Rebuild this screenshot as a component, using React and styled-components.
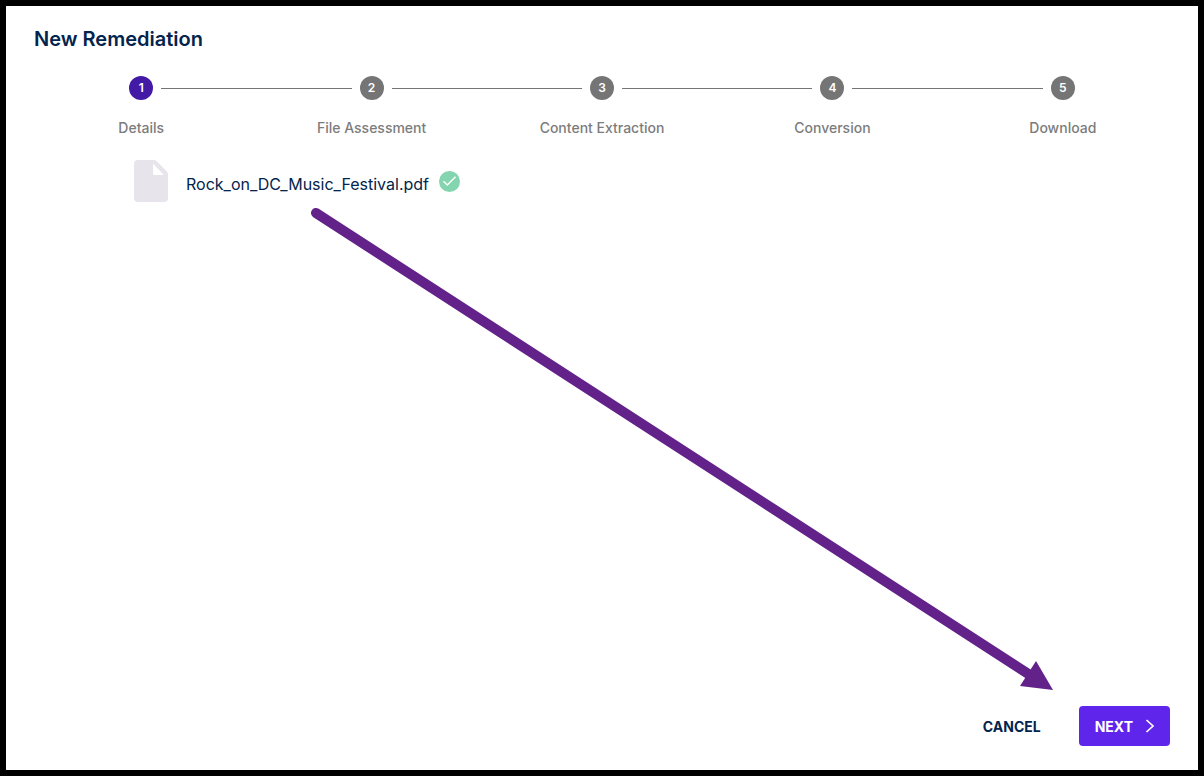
import styled, { createGlobalStyle } from "styled-components";

const GlobalStyle = createGlobalStyle`
  * {
    box-sizing: border-box;
  }

  body {
    margin: 0;
    background: #fff;
    color: #03244d;
    font-family: Inter, "Liberation Sans", sans-serif;
  }
`;
const Pagina = styled.main`
  position: relative;
  display: flex;
  flex-direction: column;
  min-height: 100vh;
  padding: 20px;
  border: 6px solid #000;
`;
const Titulo = styled.h1`
  margin: 0;
  padding: 0 8px;
  font-size: 20px;
  line-height: 26px;
  font-weight: 600;
`;
const Passos = styled.ol`
  display: flex;
  margin: 24px 0 0;
  padding: 0;
  list-style: none;
`;
const Passo = styled.li`
  flex: 1;
  text-align: center;
`;
const Trilho = styled.div`
  display: flex;
  align-items: center;
  gap: 8px;
`;
const Linha = styled.span`
  flex: 1;
  height: 1px;
  background: ${(props) => (props.$visivel ? "#757575" : "transparent")};
`;
const Numero = styled.span`
  width: 24px;
  height: 24px;
  border-radius: 50%;
  background: ${(props) => (props.$ativo ? "#431aa6" : "#757575")};
  color: #fff;
  font-size: 12px;
  line-height: 24px;
  font-weight: 600;
`;
const Rotulo = styled.span`
  display: block;
  margin-top: 18px;
  color: #7c7c7c;
  font-size: 14px;
  line-height: 20px;
  font-weight: 500;
`;
const Arquivo = styled.section`
  display: flex;
  align-items: center;
  margin: 22px 108px 0;
`;
const NomeArquivo = styled.p`
  margin: 0 10px 0 18px;
  padding-top: 6px;
  font-size: 16px;
  line-height: 20px;
`;
const Rodape = styled.footer`
  display: flex;
  justify-content: flex-end;
  gap: 20px;
  margin-top: auto;
  padding: 0 8px 4px;
`;
const Botao = styled.button`
  display: flex;
  align-items: center;
  gap: 9px;
  height: 40px;
  padding: 0 ${(props) => (props.$primario ? "12px" : "18px")} 0 16px;
  border: 0;
  border-radius: 4px;
  background: ${(props) => (props.$primario ? "#6025ea" : "transparent")};
  color: ${(props) => (props.$primario ? "#fff" : "#03244d")};
  font-family: inherit;
  font-size: 14px;
  font-weight: 700;
  text-transform: uppercase;
  cursor: pointer;
`;
const Seta = styled.svg`
  position: absolute;
  inset: 0;
  width: 100%;
  height: 100%;
  pointer-events: none;
`;

const passos = [
  "Details",
  "File Assessment",
  "Content Extraction",
  "Conversion",
  "Download",
];

function IconeArquivo() {
  return (
    <svg width="34" height="42" viewBox="0 0 34 42" aria-hidden="true">
      <path
        fill="#e7e4eb"
        fillRule="evenodd"
        d="M4 0H20Q21.500 0 22.500 1L32.800 11.500Q34 12.700 34 14.500V38Q34 42 30 42H4Q0 42 0 38V4Q0 0 4 0ZM19 3.500V13.500Q19 15 20.500 15H30Z"
      />
    </svg>
  );
}

function IconeConcluido() {
  return (
    <svg width="21" height="21" viewBox="0 0 21 21" role="img" aria-label="Uploaded">
      <circle cx="10.500" cy="10.500" r="10.500" fill="#82d5ae" />
      <path
        d="M4.500 10.300L8.300 14L16.500 5.700"
        fill="none"
        stroke="#fff"
        strokeWidth="1.500"
      />
    </svg>
  );
}

function App() {
  return (
    <>
      <GlobalStyle />
      <Pagina>
        <Titulo>New Remediation</Titulo>
        <Passos>
          {passos.map((passo, indice) => (
            <Passo key={passo} aria-current={indice === 0 ? "step" : undefined}>
              <Trilho>
                <Linha $visivel={indice > 0} />
                <Numero $ativo={indice === 0}>{indice + 1}</Numero>
                <Linha $visivel={indice < passos.length - 1} />
              </Trilho>
              <Rotulo>{passo}</Rotulo>
            </Passo>
          ))}
        </Passos>
        <Arquivo>
          <IconeArquivo />
          <NomeArquivo>Rock_on_DC_Music_Festival.pdf</NomeArquivo>
          <IconeConcluido />
        </Arquivo>
        <Rodape>
          <Botao type="button">Cancel</Botao>
          <Botao type="button" $primario>
            Next
            <svg width="16" height="16" viewBox="0 0 16 16" aria-hidden="true">
              <path
                d="M4.500 2L11 8L4.500 14"
                fill="none"
                stroke="#fff"
                strokeWidth="1.700"
              />
            </svg>
          </Botao>
        </Rodape>
        <Seta viewBox="0 0 1192 764" preserveAspectRatio="none" aria-hidden="true">
          <path
            d="M310 207L1024 669"
            stroke="#632289"
            strokeWidth="10"
            strokeLinecap="round"
          />
          <path d="M1047 684L1030 655L1014 680Z" fill="#632289" />
        </Seta>
      </Pagina>
    </>
  );
}

export default App;
